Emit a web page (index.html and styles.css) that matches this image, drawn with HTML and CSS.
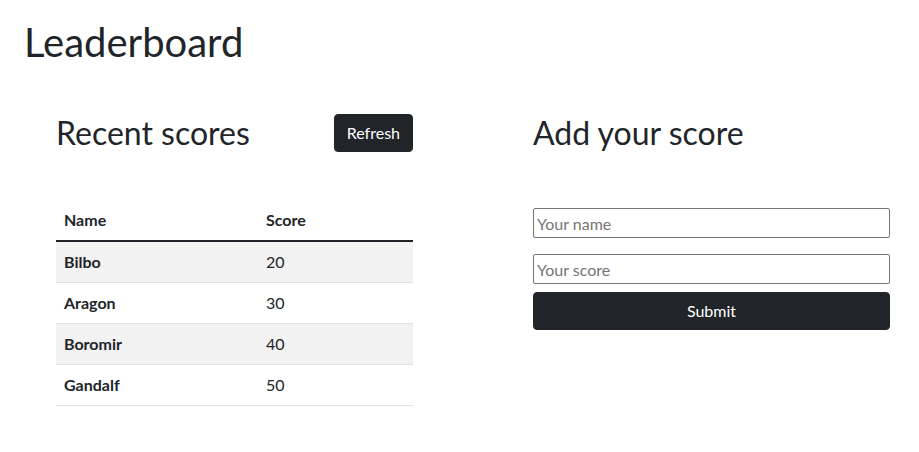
FILE: index.html
```html
<!DOCTYPE html>
<html>
<head>
<meta charset="utf-8">
<link rel="stylesheet" href="styles.css">
</head>
<body>
<div class="page">
  <h1 class="title">Leaderboard</h1>
  <div class="columns">
    <section class="col">
      <div class="col-head">
        <h2 class="heading">Recent scores</h2>
        <button class="btn">Refresh</button>
      </div>
      <table class="scores">
        <thead>
          <tr><th class="c-name">Name</th><th>Score</th></tr>
        </thead>
        <tbody>
          <tr class="odd"><th>Bilbo</th><td>20</td></tr>
          <tr><th>Aragon</th><td>30</td></tr>
          <tr class="odd"><th>Boromir</th><td>40</td></tr>
          <tr><th>Gandalf</th><td>50</td></tr>
        </tbody>
      </table>
    </section>
    <section class="col">
      <div class="col-head">
        <h2 class="heading">Add your score</h2>
      </div>
      <form class="form">
        <input class="field" type="text" placeholder="Your name">
        <input class="field" type="text" placeholder="Your score">
        <button class="btn btn-block" type="button">Submit</button>
      </form>
    </section>
  </div>
</div>
</body>
</html>
```
FILE: styles.css
```css
* { box-sizing: border-box; }
html, body {
  margin: 0;
  background: #fff;
}
body {
  font-family: "Lato", sans-serif;
  color: #212529;
  font-size: 16px;
  line-height: 1.5;
}
.page {
  padding: 12px 24px;
}
.title {
  margin: 0;
  font-size: 40px;
  font-weight: 400;
  line-height: 1.2;
  padding-top: 6px;
}
.columns {
  display: flex;
  gap: 120px;
  padding: 0 0 0 32px;
  margin-top: 48px;
}
.col {
  width: 357px;
  flex-shrink: 0;
}
.col-head {
  display: flex;
  justify-content: space-between;
  align-items: flex-start;
  height: 86px;
}
.heading {
  margin: 0;
  font-size: 32px;
  font-weight: 400;
  line-height: 1.2;
  padding-top: 0;
}
.btn {
  font-family: inherit;
  font-size: 16px;
  line-height: 24px;
  color: #fff;
  background: #212529;
  border: 1px solid #212529;
  border-radius: 4px;
  padding: 6px 12px;
}
.btn-block {
  width: 100%;
  display: block;
}
.scores {
  width: 100%;
  border-collapse: collapse;
}
.scores th, .scores td {
  text-align: left;
  padding: 8px;
  border-bottom: 1px solid #dee2e6;
  font-size: 16px;
  line-height: 24px;
}
.scores th { font-weight: 700; }
.scores thead th {
  border-bottom: 2px solid #212529;
}
.scores .c-name { width: 202px; }
.scores tbody tr.odd { background: #f2f2f2; }
.form {
  display: flex;
  flex-direction: column;
  padding-top: 8px;
}
.field {
  font-family: inherit;
  font-size: 16px;
  height: 30px;
  padding: 1px 3px;
  border: 1px solid #767676;
  border-radius: 2px;
  margin-bottom: 16px;
}
.field:nth-of-type(2) { margin-bottom: 8px; }
.field::placeholder { color: #757575; }
```
